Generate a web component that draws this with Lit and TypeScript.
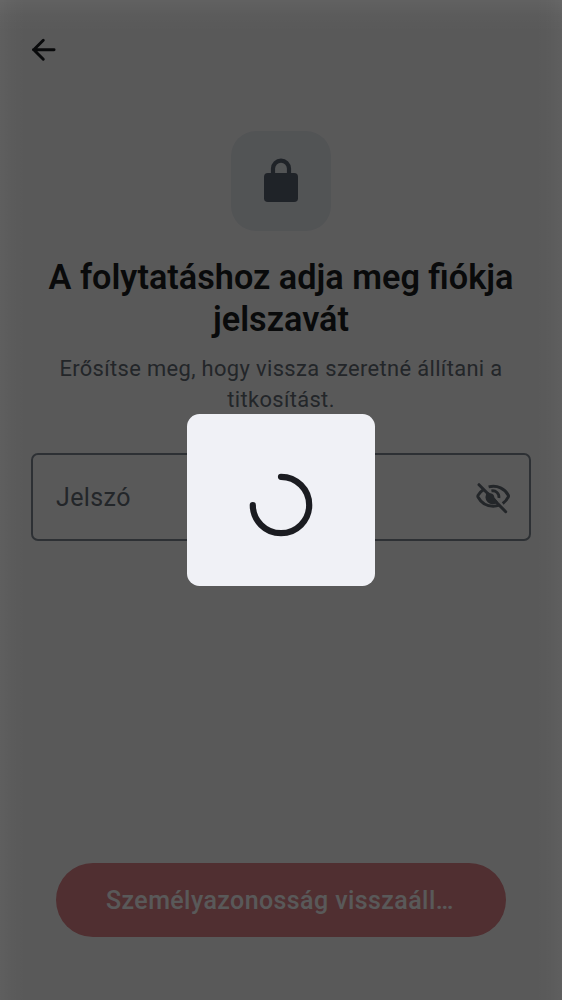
import { LitElement, html, css } from "lit";
import { customElement, property } from "lit/decorators.js";

@customElement("loading-dialog")
class LoadingDialog extends LitElement {
  static styles = css`
    :host {
      position: absolute;
      inset: 0;
      display: flex;
      align-items: center;
      justify-content: center;
      background:
        linear-gradient(90deg, rgba(255, 255, 255, 0.036), rgba(255, 255, 255, 0.013) 13px, transparent 26px, transparent calc(100% - 26px), rgba(255, 255, 255, 0.013) calc(100% - 13px), rgba(255, 255, 255, 0.036)),
        linear-gradient(180deg, rgba(255, 255, 255, 0.05), rgba(255, 255, 255, 0.016) 15px, transparent 32px),
        rgba(0, 0, 0, 0.65);
    }
    .card {
      display: flex;
      align-items: center;
      justify-content: center;
      width: 187.5px;
      height: 172px;
      box-sizing: border-box;
      padding-top: 9px;
      border-radius: 12.5px;
      background: #f0f1f6;
    }
    svg {
      display: block;
    }
  `;
  render() {
    return html`<div class="card" role="progressbar">
      <svg width="64" height="64" viewBox="0 0 64 64" fill="none" stroke="#1b1c21" stroke-width="6.2" stroke-linecap="round">
        <path d="M32 3.8A28.2 28.2 0 1 1 3.8 32" />
      </svg>
    </div>`;
  }
}

@customElement("password-field")
class PasswordField extends LitElement {
  @property() label = "";
  static styles = css`
    :host {
      display: block;
    }
    .field {
      display: flex;
      align-items: center;
      justify-content: space-between;
      box-sizing: border-box;
      height: 88px;
      padding: 0 17px 0 23px;
      border: 2px solid #818a94;
      border-radius: 7px;
      color: #656d77;
      font-size: 25px;
      letter-spacing: 0.39px;
    }
    svg {
      display: block;
    }
  `;
  render() {
    return html`<div class="field">
      <span>${this.label}</span>
      <svg width="38" height="38" viewBox="0 0 38 38" fill="none" stroke="#656d77" stroke-width="3" stroke-linecap="round" stroke-linejoin="round">
        <path d="M5 6.7L31.7 33.7" />
        <path stroke-linecap="butt" d="M14.6 8.9C23.5 6.6 31 11 34.3 17.2q.4.8 0 1.6C33.1 21.3 31.4 23.5 28.7 25.5" />
        <path stroke-linecap="butt" d="M10 11.2C7.2 13 5.2 15.2 4 17.4q-.4.8 0 1.6C7.5 25.5 13.5 28.2 19.2 28.2c2.2 0 4.2-.3 6-1" />
        <path stroke-linecap="butt" stroke-width="2.8" d="M17.4 12.9C21.800 12 25.5 15.500 24.900 20" />
        <path fill="#656d77" stroke="none" d="M13.400 14L16.500 15.200Q20 15.500 20.400 19.500L24 24A7.200 7.200 0 0 1 13.400 14Z" />
      </svg>
    </div>`;
  }
}

@customElement("app-root")
class AppRoot extends LitElement {
  static styles = css`
    :host {
      display: block;
      position: relative;
      height: 1000px;
      overflow: hidden;
      background: #fff;
      font-family: Roboto, sans-serif;
    }
    .screen {
      display: flex;
      flex-direction: column;
      box-sizing: border-box;
      height: 100%;
      padding: 31px 31px 63px;
    }
    .bar {
      display: flex;
      height: 100px;
      align-items: flex-start;
    }
    svg {
      display: block;
    }
    .back {
      margin-left: -6px;
    }
    .tile {
      display: flex;
      align-items: center;
      justify-content: center;
      align-self: center;
      width: 100px;
      height: 100px;
      border-radius: 25px;
      background: #ebeff4;
    }
    h1 {
      margin: 25px 0 0;
      color: #1b1d22;
      font-size: 34.25px;
      line-height: 42px;
      font-weight: 600;
      text-align: center;
    }
    p {
      margin: 13px 0 0;
      color: #656d77;
      font-size: 21.9px;
      line-height: 31px;
      letter-spacing: 0.36px;
      text-align: center;
    }
    password-field {
      margin-top: 38px;
    }
    .action {
      margin: auto 25px 0;
      height: 74px;
      padding: 1px 50px 0;
      border: 0;
      border-radius: 37px;
      background: #e4868c;
      color: #fff;
      font: 500 25px/73px Roboto, sans-serif;
      letter-spacing: 0.41px;
      overflow: hidden;
      text-overflow: ellipsis;
      white-space: nowrap;
    }
  `;
  render() {
    return html`
      <div class="screen">
        <div class="bar">
          <svg class="back" width="37.5" height="37.5" viewBox="0 0 24 24" fill="none" stroke="#1b1d22" stroke-width="1.9" stroke-linecap="round" stroke-linejoin="round">
            <path d="M18.6 12H5.4M11.7 5.9L5.6 12l6.1 6.1" />
          </svg>
        </div>
        <div class="tile">
          <svg width="50" height="50" viewBox="0 0 50 50">
            <path d="M17 19v-6.4a8 8 0 0 1 16 0V19" fill="none" stroke="#5b6673" stroke-width="4.2" />
            <rect x="8" y="17" width="34" height="29" rx="3.8" fill="#5b6673" />
          </svg>
        </div>
        <h1>A folytatáshoz adja meg fiókja jelszavát</h1>
        <p>Erősítse meg, hogy vissza szeretné állítani a titkosítást.</p>
        <password-field label="Jelszó"></password-field>
        <button class="action">Személyazonosság visszaállítása</button>
      </div>
      <loading-dialog></loading-dialog>
    `;
  }
}
